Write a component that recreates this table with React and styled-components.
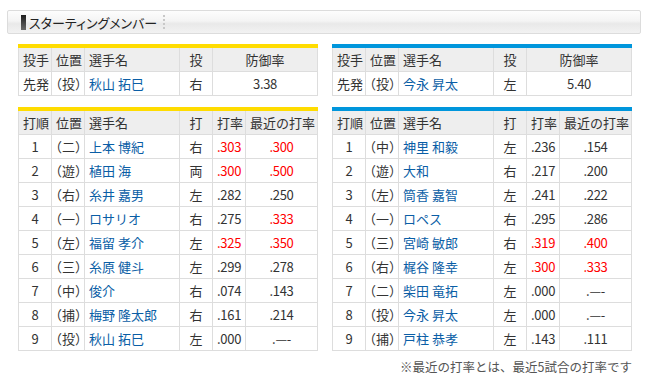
import React from 'react';
import styled, { createGlobalStyle } from 'styled-components';

const GlobalStyle = createGlobalStyle`
  body {
    margin: 0;
    background: #fff;
    color: #333;
    font-family: "Noto Sans CJK JP", "Noto Sans", sans-serif;
  }
`;

const tigers = {
  color: '#ffdc00',
  pitcher: ['先発', '（投）', '秋山 拓巳', '右', '3.38'],
  lineup: [
    ['1', '（二）', '上本 博紀', '右', '.303', '.300', true, true],
    ['2', '（遊）', '植田 海', '両', '.300', '.500', true, true],
    ['3', '（右）', '糸井 嘉男', '左', '.282', '.250'],
    ['4', '（一）', 'ロサリオ', '右', '.275', '.333', false, true],
    ['5', '（左）', '福留 孝介', '左', '.325', '.350', true, true],
    ['6', '（三）', '糸原 健斗', '左', '.299', '.278'],
    ['7', '（中）', '俊介', '右', '.074', '.143'],
    ['8', '（捕）', '梅野 隆太郎', '右', '.161', '.214'],
    ['9', '（投）', '秋山 拓巳', '左', '.000', '.—-'],
  ],
};

const baystars = {
  color: '#0096dc',
  pitcher: ['先発', '（投）', '今永 昇太', '左', '5.40'],
  lineup: [
    ['1', '（中）', '神里 和毅', '左', '.236', '.154'],
    ['2', '（遊）', '大和', '右', '.217', '.200'],
    ['3', '（左）', '筒香 嘉智', '左', '.241', '.222'],
    ['4', '（一）', 'ロペス', '右', '.295', '.286'],
    ['5', '（三）', '宮崎 敏郎', '右', '.319', '.400', true, true],
    ['6', '（右）', '梶谷 隆幸', '左', '.300', '.333', true, true],
    ['7', '（二）', '柴田 竜拓', '左', '.000', '.—-'],
    ['8', '（投）', '今永 昇太', '左', '.000', '.—-'],
    ['9', '（捕）', '戸柱 恭孝', '左', '.143', '.111'],
  ],
};

const PitcherTable = ({ team }) => {
  const [role, pos, name, hand, era] = team.pitcher;
  return (
    <Table $bar={team.color}>
      <colgroup>
        <Col $w={33} />
        <Col $w={33} />
        <Col $w={95} />
        <Col $w={33} />
        <Col />
      </colgroup>
      <thead>
        <tr>
          <Th>投手</Th>
          <Th>位置</Th>
          <Th>選手名</Th>
          <Th $center>投</Th>
          <Th $center>防御率</Th>
        </tr>
      </thead>
      <tbody>
        <tr>
          <Td>{role}</Td>
          <PosCell>{pos}</PosCell>
          <NameCell>{name}</NameCell>
          <Td $center>{hand}</Td>
          <Num>{era}</Num>
        </tr>
      </tbody>
    </Table>
  );
};

const LineupTable = ({ team }) => (
  <Table $bar={team.color}>
    <colgroup>
      <Col $w={33} />
      <Col $w={33} />
      <Col $w={95} />
      <Col $w={33} />
      <Col $w={33} />
      <Col />
    </colgroup>
    <thead>
      <tr>
        <Th>打順</Th>
        <Th>位置</Th>
        <Th>選手名</Th>
        <Th $center>打</Th>
        <Th $center>打率</Th>
        <Th $center>最近の打率</Th>
      </tr>
    </thead>
    <tbody>
      {team.lineup.map(([order, pos, name, hand, avg, recent, hotAvg, hotRecent]) => (
        <tr key={order}>
          <Td $center>{order}</Td>
          <PosCell>{pos}</PosCell>
          <NameCell>{name}</NameCell>
          <Td $center>{hand}</Td>
          <Num $hot={hotAvg}>{avg}</Num>
          <Num $hot={hotRecent}>{recent}</Num>
        </tr>
      ))}
    </tbody>
  </Table>
);

const App = () => (
  <Page>
    <GlobalStyle />
    <TitleBar>
      <Marker />
      <Title>スターティングメンバー</Title>
      <Dots />
    </TitleBar>
    <Columns>
      <Column>
        <PitcherTable team={tigers} />
        <LineupTable team={tigers} />
      </Column>
      <Column>
        <PitcherTable team={baystars} />
        <LineupTable team={baystars} />
      </Column>
      <Note>※最近の打率とは、最近5試合の打率です</Note>
    </Columns>
  </Page>
);

export default App;

const Page = styled.div`
  width: 650px;
  box-sizing: border-box;
  padding: 10px 9px 0 7px;
`;

const TitleBar = styled.div`
  display: flex;
  align-items: center;
  height: 22px;
  padding-left: 13px;
  margin-bottom: 10px;
  border: 1px solid #dcdcdc;
  border-radius: 2px;
  background: linear-gradient(#fdfdfd 0%, #f4f4f4 45%, #e9e9e9 58%, #f2f2f2 100%);
`;

const Marker = styled.span`
  width: 5px;
  height: 15px;
  margin-right: 3px;
  background: linear-gradient(#1e1e1e, #6a6a6a);
`;

const Title = styled.span`
  font-size: 13px;
  color: #222;
  font-feature-settings: "palt";
`;

const Dots = styled.span`
  height: 14px;
  margin-left: 6px;
  border-left: 2px dotted #c8c8c8;
`;

const Columns = styled.div`
  display: grid;
  grid-template-columns: 300px 300px;
  column-gap: 14px;
  padding-left: 11px;
`;

const Column = styled.div`
  display: flex;
  flex-direction: column;
  gap: 11px;
`;

const Table = styled.table`
  width: 300px;
  table-layout: fixed;
  border-collapse: collapse;
  border-top: 4px solid ${(p) => p.$bar};
  font-size: 13px;
`;

const Col = styled.col`
  width: ${(p) => (p.$w ? `${p.$w}px` : 'auto')};
`;

const Td = styled.td`
  height: 23px;
  padding: 0 4px;
  border: 1px solid #dddddd;
  text-align: ${(p) => (p.$center ? 'center' : 'left')};
  white-space: nowrap;
  line-height: 23px;
  color: #333;
`;

const Th = styled(Td).attrs({ as: 'th' })`
  font-weight: normal;
  background: #eeeeee;
`;

const PosCell = styled(Td)`
  padding: 0 3px;
  font-feature-settings: "palt";
  letter-spacing: 0.5px;
`;

const NameCell = styled(Td)`
  color: #0a5ea6;
`;

const Num = styled(Td)`
  text-align: center;
  letter-spacing: -0.3px;
  color: ${(p) => (p.$hot ? '#ff0000' : '#333')};
`;

const Note = styled.p`
  grid-column: 1 / -1;
  margin: 6px 0 0;
  text-align: right;
  font-size: 12.5px;
  color: #555;
`;
